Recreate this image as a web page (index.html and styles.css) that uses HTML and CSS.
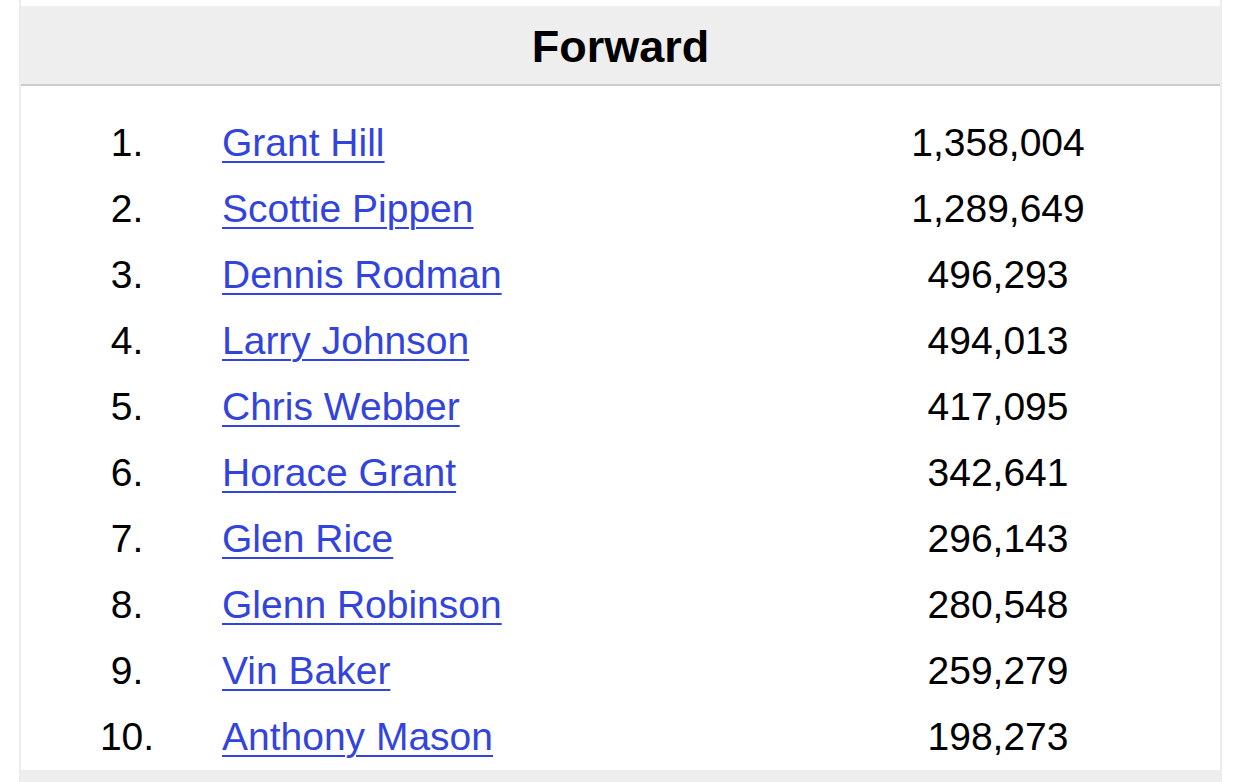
FILE: index.html
```html
<!DOCTYPE html>
<html>
<head>
<meta charset="utf-8">
<link rel="stylesheet" href="styles.css">
</head>
<body>
<div class="board">
  <div class="head">Forward</div>
  <div class="rows">
    <div class="row"><span class="rank">1.</span><a class="name" href="#">Grant Hill</a><span class="votes">1,358,004</span></div>
    <div class="row"><span class="rank">2.</span><a class="name" href="#">Scottie Pippen</a><span class="votes">1,289,649</span></div>
    <div class="row"><span class="rank">3.</span><a class="name" href="#">Dennis Rodman</a><span class="votes">496,293</span></div>
    <div class="row"><span class="rank">4.</span><a class="name" href="#">Larry Johnson</a><span class="votes">494,013</span></div>
    <div class="row"><span class="rank">5.</span><a class="name" href="#">Chris Webber</a><span class="votes">417,095</span></div>
    <div class="row"><span class="rank">6.</span><a class="name" href="#">Horace Grant</a><span class="votes">342,641</span></div>
    <div class="row"><span class="rank">7.</span><a class="name" href="#">Glen Rice</a><span class="votes">296,143</span></div>
    <div class="row"><span class="rank">8.</span><a class="name" href="#">Glenn Robinson</a><span class="votes">280,548</span></div>
    <div class="row"><span class="rank">9.</span><a class="name" href="#">Vin Baker</a><span class="votes">259,279</span></div>
    <div class="row"><span class="rank">10.</span><a class="name" href="#">Anthony Mason</a><span class="votes">198,273</span></div>
  </div>
  <div class="foot"></div>
</div>
</body>
</html>
```

FILE: styles.css
```css
html, body {
  margin: 0;
  padding: 0;
  background: #ffffff;
  overflow: hidden;
}
body {
  font-family: "Liberation Sans", Arial, sans-serif;
  color: #000;
}
.board {
  margin-left: 19px;
  width: 1199px;
  border-left: 2px solid #ececec;
  border-right: 2px solid #ececec;
  padding-top: 6px;
}
.head {
  background: #eeeeee;
  height: 74px;
  padding-top: 4px;
  line-height: 74px;
  text-align: center;
  font-weight: bold;
  font-size: 45px;
  border-bottom: 2px solid #cccccc;
}
.rows {
  padding: 24px 122px 0 36px;
}
.row {
  display: grid;
  grid-template-columns: 140px 1fr 200px;
  height: 66px;
  line-height: 66px;
  font-size: 39px;
}
.rank {
  text-align: center;
}
.name {
  justify-self: start;
  margin-left: 25px;
  color: #3344dd;
  text-decoration: underline;
  text-decoration-thickness: 2px;
  text-underline-offset: 5px;
}
.votes {
  text-align: center;
}
.foot {
  background: #eeeeee;
  height: 30px;
}
```
